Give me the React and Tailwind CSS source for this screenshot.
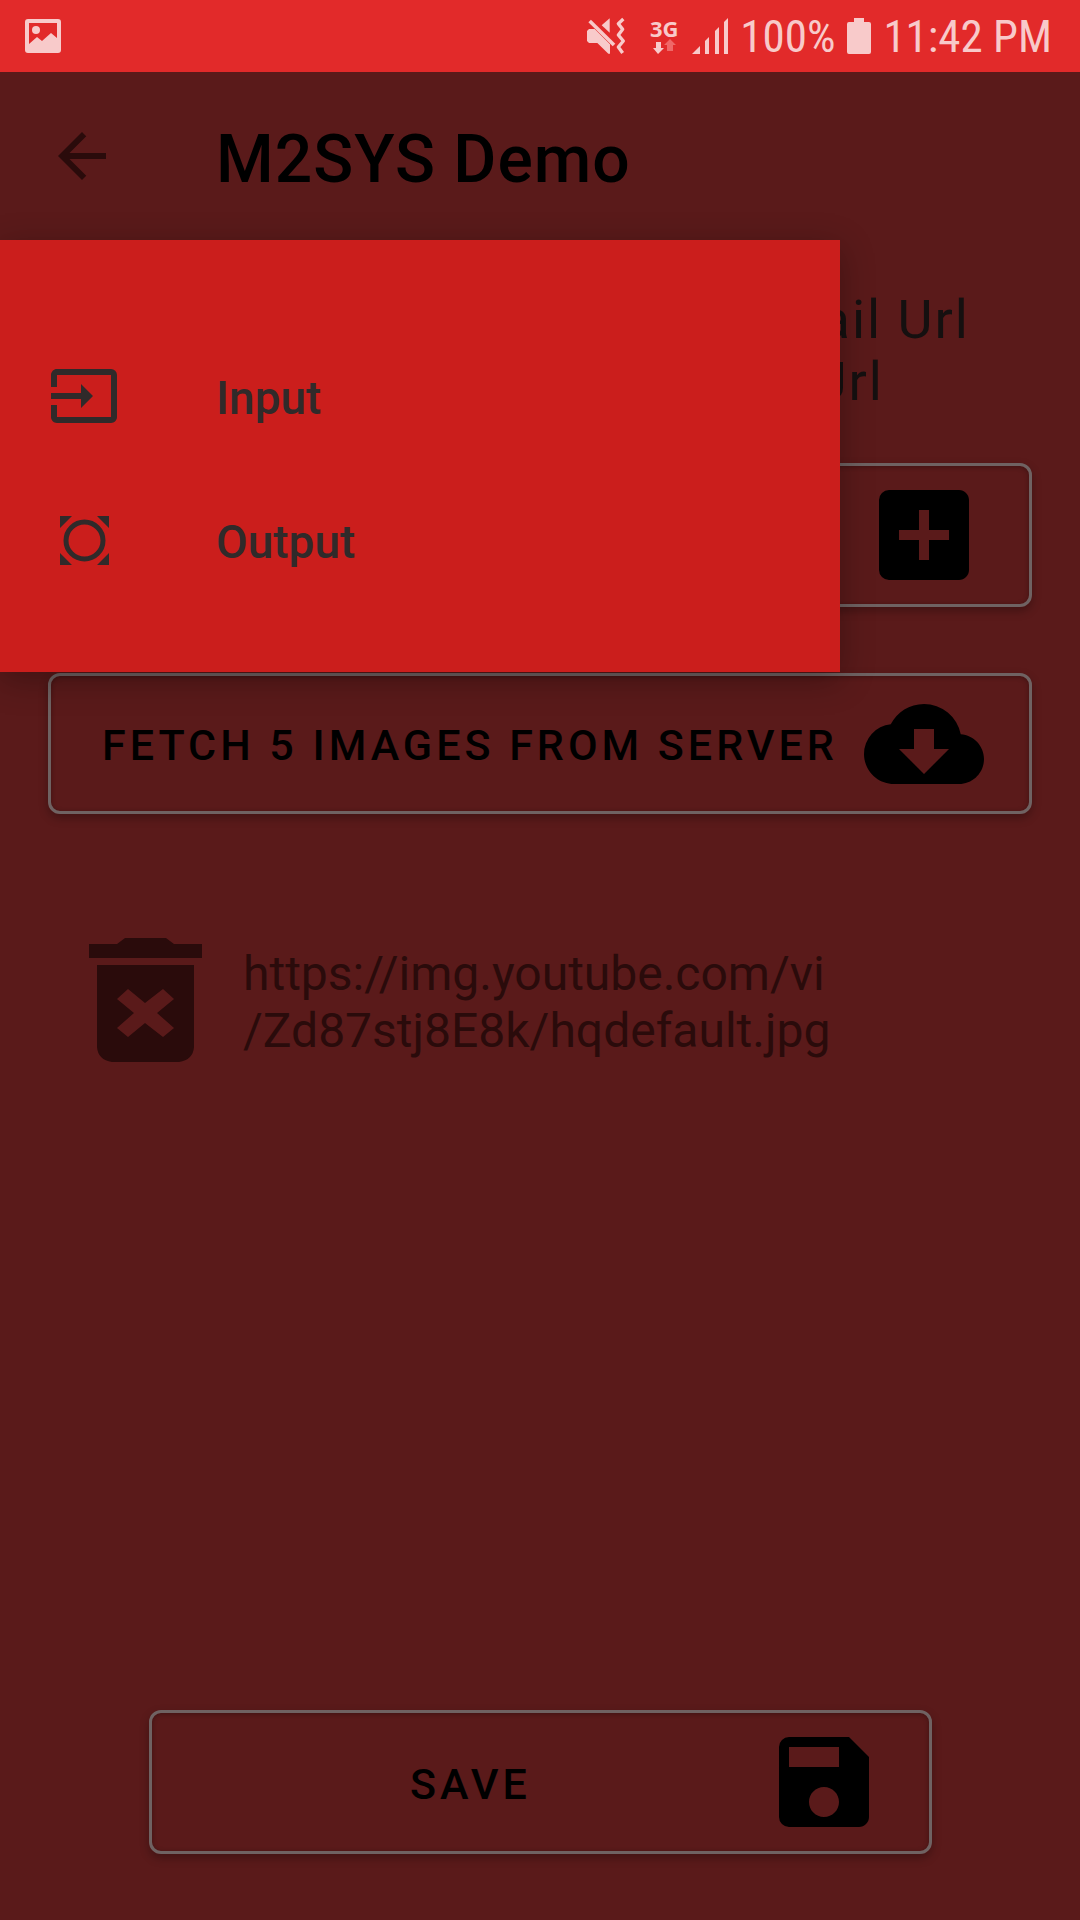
import React from "react";
import { MdArrowBack, MdInput, MdAddBox, MdCloudDownload, MdSave } from "react-icons/md";

function MutedIcon() {
  return (
    <svg className="h-[38px] w-10" viewBox="78 48 120 114" fill="currentColor" aria-hidden="true">
      <path d="M125 73L149 52V95Z" />
      <path d="M87 84H104L150 130V158H145L112 126H87L81 120V90Z" />
      <path d="M89 60L162 132" fill="none" stroke="currentColor" strokeWidth="11" />
      <path d="M190 54L175 68L188 85L175 102L190 120L175 138L188 156" fill="none" stroke="currentColor" strokeWidth="10" strokeLinejoin="round" />
    </svg>
  );
}

function SignalIcon() {
  return (
    <svg className="h-9 w-9" viewBox="0 0 36 36" fill="currentColor" aria-hidden="true">
      <path d="M0 36L8 28V36ZM13 23L17 19V36H13ZM23 13L27 9V36H23ZM32 4L36 0V36H32Z" />
    </svg>
  );
}

function OutputIcon() {
  return (
    <svg className="h-[72px] w-[72px]" viewBox="0 0 72 72" fill="currentColor" aria-hidden="true">
      <path d="M12 12H24L12 24ZM61 12V24L49 12ZM12 61V49L24 61ZM61 61H49L61 49Z" />
      <circle cx="36.500" cy="36.500" r="18.500" fill="none" stroke="currentColor" strokeWidth="5" />
    </svg>
  );
}

function TrashIcon() {
  return (
    <svg className="h-[125px] w-[115px]" viewBox="0 0 115 125" fill="currentColor" aria-hidden="true">
      <path d="M1 7H29L37 1H78L86 7H114V21H1Z" />
      <path
        fillRule="evenodd"
        d="M9 28H106V110Q105 123 91 125H24Q10 123 9 110ZM40 52L29 62L46 76L29 91L40 100L57 86L75 100L86 91L69 76L86 62L75 52L57 66Z"
      />
    </svg>
  );
}

function StatusBar() {
  return (
    <div className="flex h-[72px] items-center justify-between bg-[#e22a2a] pr-7 pl-[25px] text-[#f8caca]">
      <svg className="h-[34px] w-9" viewBox="0 0 36 34" aria-hidden="true">
        <path
          fill="currentColor"
          fillRule="evenodd"
          d="M3 0H33Q36 0 36 3V31Q36 34 33 34H3Q0 34 0 31V3Q0 0 3 0ZM4 4V25L12 18L17 22L26 14L32 19V4Z"
        />
        <circle cx="11" cy="11" r="4" fill="currentColor" />
      </svg>
      <div className="flex items-center">
        <MutedIcon />
        <div className="mr-3.5 ml-6 flex w-7 flex-col items-center font-['Noto_Sans',sans-serif] text-[22px] leading-5 font-bold">
          3G
          <svg className="mt-px h-4 w-6" viewBox="0 0 24 16" aria-hidden="true">
            <path d="M4 3H9V9H12L6 15L1 9H4Z" fill="#f8caca" />
            <path d="M15 12V6H12L18 0L24 6H21V12Z" fill="#ef6868" />
          </svg>
        </div>
        <SignalIcon />
        <span className="ml-3 pt-0.5 font-['Roboto_Condensed','Liberation_Sans_Narrow','Roboto',sans-serif] text-[45px] leading-[72px]">100%</span>
        <svg className="mr-3 ml-3 h-9 w-6" viewBox="0 0 24 36" fill="currentColor" aria-hidden="true">
          <path d="M7 0H17V4H22Q24 4 24 6V34Q24 36 22 36H2Q0 36 0 34V6Q0 4 2 4H7Z" />
        </svg>
        <span className="pt-0.5 font-['Roboto_Condensed','Liberation_Sans_Narrow','Roboto',sans-serif] text-[45px] leading-[72px]">11:42 PM</span>
      </div>
    </div>
  );
}

function OutlinedButton({ children, icon: Icon, height = "h-36", ...props }) {
  return (
    <button
      {...props}
      className={`${height} flex w-full items-center rounded-xl border-[3px] border-[#6f6262] px-[45px] text-[43px] font-medium tracking-[4px] text-black shadow-[0_4px_10px_rgba(0,0,0,0.28),inset_0_1px_5px_rgba(0,0,0,0.3)]`}
    >
      <span className="mr-5 flex-1 pt-1 text-center whitespace-nowrap">{children}</span>
      <Icon className="size-[120px] shrink-0" aria-hidden="true" />
    </button>
  );
}

function NavMenu() {
  return (
    <nav className="absolute top-full left-0 z-10 w-7/9 bg-[#cb1e1c] pt-[84px] pb-[60px] text-[#302a2a] shadow-[0_8px_32px_rgba(0,0,0,0.3)]">
      <a href="#input" className="flex h-36 items-center gap-24 pl-12 text-[46px] font-medium">
        <MdInput className="size-[72px]" aria-hidden="true" />
        <span className="pt-1">Input</span>
      </a>
      <a href="#output" className="flex h-36 items-center gap-24 pl-12 text-[46px] font-medium">
        <OutputIcon />
        <span className="pt-1">Output</span>
      </a>
    </nav>
  );
}

export default function App() {
  return (
    <div className="flex min-h-screen flex-col bg-[#5a1a1a] font-['Roboto',sans-serif]">
      <StatusBar />
      <header className="relative flex h-[168px] items-center pl-[46px]">
        <button aria-label="Back" className="text-[#2a0b0b]">
          <MdArrowBack className="size-[72px]" aria-hidden="true" />
        </button>
        <h1 className="ml-[98px] pt-1.5 text-[66px] font-medium tracking-[1px] text-black">M2SYS Demo</h1>
        <NavMenu />
      </header>
      <main className="flex flex-1 flex-col px-12 pt-[49px]">
        <div className="text-right text-[54px] leading-[62px] tracking-[2px] text-[#151010]">
          <p className="pr-[62px]">Thumbnail Url</p>
          <p className="pr-[148px]">Url</p>
        </div>
        <div className="mt-[50px] flex flex-col gap-[66px]">
          <OutlinedButton icon={MdAddBox} aria-label="Add" />
          <OutlinedButton icon={MdCloudDownload} height="h-[141px]">
            FETCH 5 IMAGES FROM SERVER
          </OutlinedButton>
        </div>
        <div className="mt-[123px] flex items-center gap-10 pl-10 text-[#2a0b0b]">
          <button aria-label="Delete image">
            <TrashIcon />
          </button>
          <p className="pt-1 text-[48px] leading-[57px]">
            https://img.youtube.com/vi
            <br />
            /Zd87stj8E8k/hqdefault.jpg
          </p>
        </div>
        <div className="mt-auto pr-[100px] pb-[66px] pl-[101px]">
          <OutlinedButton icon={MdSave}>SAVE</OutlinedButton>
        </div>
      </main>
    </div>
  );
}
